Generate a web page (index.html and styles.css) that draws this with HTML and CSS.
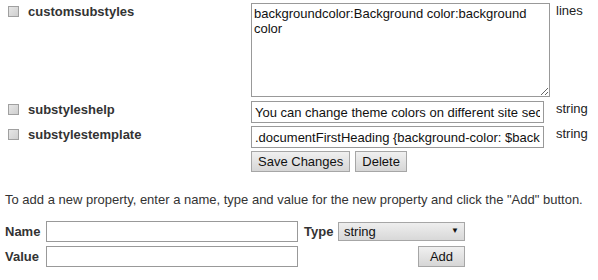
FILE: index.html
```html
<!DOCTYPE html>
<html>
<head>
<meta charset="utf-8">
<link rel="stylesheet" href="styles.css">
</head>
<body>
<form class="props">
  <div class="prop-grid">
    <span class="cb"><input type="checkbox" class="check"></span>
    <span class="label">customsubstyles</span>
    <span class="value"><textarea class="ta">backgroundcolor:Background color:background color</textarea></span>
    <span class="type">lines</span>

    <span class="cb"><input type="checkbox" class="check"></span>
    <span class="label">substyleshelp</span>
    <span class="value"><input class="txt wide" type="text" value="You can change theme colors on different site sections"></span>
    <span class="type">string</span>

    <span class="cb"><input type="checkbox" class="check"></span>
    <span class="label">substylestemplate</span>
    <span class="value"><input class="txt wide" type="text" value=".documentFirstHeading {background-color: $backgroundcolor}"></span>
    <span class="type">string</span>

    <span class="cb"></span>
    <span class="label"></span>
    <span class="value buttons"><button type="button" class="btn">Save Changes</button><button type="button" class="btn">Delete</button></span>
    <span class="type"></span>
  </div>
</form>

<p class="hint">To add a new property, enter a name, type and value for the new property and click the "Add" button.</p>

<form class="add">
  <div class="add-grid">
    <span class="label">Name</span>
    <input class="txt name" type="text">
    <span class="label type-label">Type</span>
    <span class="sel-wrap"><select class="sel"><option>string</option></select><span class="arrow">▼</span></span>

    <span class="label">Value</span>
    <input class="txt name" type="text">
    <span></span>
    <span class="add-cell"><button type="button" class="btn">Add</button></span>
  </div>
</form>
</body>
</html>
```

FILE: styles.css
```css
html, body {
  margin: 0;
  padding: 0;
  background: #ffffff;
}
body {
  font-family: "Liberation Sans", Arial, sans-serif;
  font-size: 13px;
  color: #222;
}
.props {
  margin: 0;
  padding: 3px 0 0 8px;
}
.prop-grid {
  display: grid;
  grid-template-columns: 20px 223px 304px auto;
  row-gap: 3px;
  align-items: start;
}
.cb {
  padding-top: 3px;
  height: 11px;
}
.check {
  -webkit-appearance: none;
  appearance: none;
  display: block;
  margin: 0;
  width: 11px;
  height: 11px;
  box-sizing: border-box;
  border: 1px solid #a0a0a0;
  background: linear-gradient(135deg, #e6e6e6, #cfcfcf);
}
.label {
  font-weight: bold;
  color: #333;
  line-height: 15px;
  padding-top: 1px;
}
.type {
  color: #222;
  line-height: 15px;
  padding-top: 0;
  padding-left: 1px;
}
.ta {
  display: block;
  margin: 0 0 1px 0;
  width: 299px;
  height: 94px;
  box-sizing: border-box;
  border: 1px solid #999;
  padding: 2px 2px;
  font-family: "Liberation Sans", Arial, sans-serif;
  font-size: 13px;
  line-height: 15px;
  color: #111;
  resize: both;
}
.txt {
  display: block;
  margin: 0;
  height: 22px;
  box-sizing: border-box;
  border: 1px solid #999;
  padding: 1px 3px;
  font-family: "Liberation Sans", Arial, sans-serif;
  font-size: 13px;
  color: #111;
  background: #fff;
}
.wide {
  width: 293px;
}
.buttons {
  display: flex;
  gap: 5px;
}
.btn {
  margin: 0;
  height: 21px;
  box-sizing: border-box;
  padding: 0 6px;
  border: 1px solid #a6a6a6;
  background: linear-gradient(#f0f0f0, #d6d6d6);
  font-family: "Liberation Sans", Arial, sans-serif;
  font-size: 13px;
  color: #111;
  border-radius: 0;
}
.hint {
  margin: 20px 0 0 5px;
  line-height: 15px;
  color: #333;
}
.add {
  margin: 0;
  padding: 14px 0 0 5px;
}
.add-grid {
  display: grid;
  grid-template-columns: 41px 252px 40px 127px;
  column-gap: 0;
  row-gap: 4px;
  align-items: center;
}
.add-grid .label {
  padding: 0;
}
.add-grid .type-label {
  padding-left: 6px;
}
.name {
  width: 252px;
  height: 21px;
}
.sel-wrap {
  position: relative;
  display: block;
  width: 127px;
  height: 19px;
}
.sel {
  -webkit-appearance: none;
  appearance: none;
  display: block;
  width: 127px;
  height: 19px;
  margin: 0;
  box-sizing: border-box;
  border: 1px solid #a6a6a6;
  border-radius: 0;
  padding: 0 5px;
  background: linear-gradient(#eeeeee, #d8d8d8);
  font-family: "Liberation Sans", Arial, sans-serif;
  font-size: 13px;
  color: #111;
}
.arrow {
  position: absolute;
  right: 6px;
  top: 4px;
  font-size: 8px;
  line-height: 10px;
  color: #111;
  pointer-events: none;
}
.add-cell {
  display: flex;
  justify-content: flex-end;
}
.add-cell .btn {
  width: 47px;
  padding: 0;
}
```
